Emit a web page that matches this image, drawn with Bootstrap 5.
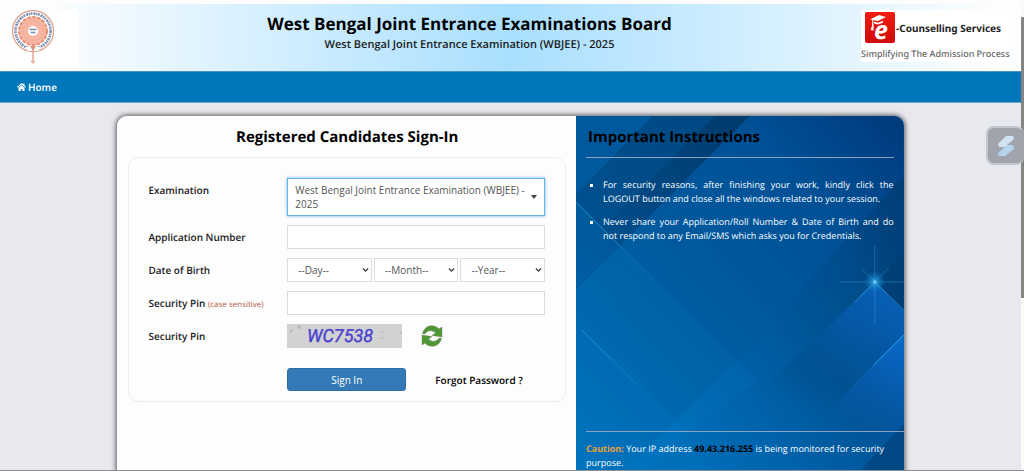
<!DOCTYPE html>
<html lang="en">
<head>
<meta charset="utf-8">
<meta name="viewport" content="width=device-width, initial-scale=1">
<title>WBJEE - Registered Candidates Sign-In</title>
<link href="https://cdn.jsdelivr.net/npm/bootstrap@5.3.0/dist/css/bootstrap.min.css" rel="stylesheet">
<style>
  body { font-family: "Open Sans", sans-serif; font-size: 10px; line-height: 14px; color: #1c1c1c; background: #e7e9ef; text-rendering: geometricPrecision; }
  .viewport { border-bottom: 1px solid #8b8d90; }
  .site-head { border-top: 4px solid #fdfdfd; height: 71px; padding: 6px 11px 0; background: linear-gradient(90deg, #fdfeff 4%, #a9dfff 50%, #fdfeff 98%); }
  .seal { width: 67px; height: 56px; background: #fff; }
  .board-name { font-size: 17px; line-height: 24px; font-weight: 700; color: #000; margin: 2px 0 0; }
  .exam-name { font-size: 11px; line-height: 18px; font-weight: 600; }
  .brand-box { background: #fff; height: 52px; width: 149px; font-family: "Noto Sans", sans-serif; }
  .brand-title { font-size: 10px; font-weight: 700; color: #222; }
  .brand-tag { font-size: 9px; line-height: 16px; font-weight: 500; color: #666; }
  .main-nav { background: #0077bb; border-top: 1px solid #4b93bd; border-bottom: 1px solid #6fa9cb; height: 32px; padding: 0 17px; }
  .main-nav a { font-weight: 600; color: #fff; gap: 2px; }
  .login-box { width: 77%; margin-top: 13px; border-radius: 10px 10px 0 0; box-shadow: 0 0 5px 1px #555; overflow: hidden; }
  .form-side { background: #fdfdfe; padding: 0 10px 0 11px; }
  .side-title { font-size: 15px; line-height: 22px; font-weight: 700; color: #000; margin: 10px 0 9px; }
  .form-frame { border: 1px solid #e9efee; border-radius: 10px; padding: 20px 20px 10px 19px; }
  .form-grid { display: grid; grid-template-columns: 35% 1fr; row-gap: 9px; }
  .form-grid label, .field-name { font-weight: 600; line-height: 24px; }
  .form-grid .hint { font-size: 8px; line-height: 10px; font-weight: 400; color: #b0563d; }
  .field { height: 24px; width: 100%; min-width: 0; padding: 0 8px; border: 1px solid #dcdcdc; border-radius: 0; font-size: 10px; line-height: 14px; color: #555; background-color: #fff; }
  select.field { padding: 0 10px; appearance: none; background-repeat: no-repeat; background-image: url("data:image/svg+xml,%3Csvg xmlns='http://www.w3.org/2000/svg' viewBox='0 0 8 6'%3E%3Cpath d='M1 1.2 4 4.2 7 1.2' fill='none' stroke='%23444' stroke-width='1.5'/%3E%3C/svg%3E"); background-size: 7px 6px; background-position: right 2px center; }
  select.exam-pick { height: 38px; padding: 4px 16px 4px 7px; white-space: normal; border-color: #66b5e4; box-shadow: 0 0 3px #66afe9; background-image: url("data:image/svg+xml,%3Csvg xmlns='http://www.w3.org/2000/svg' viewBox='0 0 8 4'%3E%3Cpath d='M1 0h6L4 4z' fill='%23444'/%3E%3C/svg%3E"); background-size: 8px 4px; background-position: right 6px center; }
  .date-row { gap: 2px; }
  .captcha { width: 115px; height: 24px; background: #d2d2d2; }
  .refresh { margin-left: 17px; line-height: 0; }
  .action-row { padding: 11px 0 0; }
  .sign-in { width: 119px; height: 23px; font-size: 10px; line-height: 14px; background: #337ab7; border: 1px solid #2e6da4; border-radius: 3px; color: #fff; padding: 0; }
  .forgot { font-weight: 600; color: #000; margin-left: 29px; }
  .info-side { background: #005a9e; color: #fff; padding: 0 0 0 10px; min-height: 356px; font-size: 9px; }
  .info-art { position: absolute; inset: 0; width: 100%; height: 100%; }
  .info-side .side-title { margin-left: 2px; }
  .rule { border-top: 1px solid #8aa3c4; }
  .notes { list-style: square; padding-left: 17px; margin: 20px 10px 0 0; text-align: justify; }
  .notes li { margin-bottom: 9px; }
  .info-rule { margin-right: 10px; }
  .caution-box { padding-left: 10px; }
  .caution { padding: 10px 4px 2px 0; }
  .caution b { color: #e6a23c; }
  .caution .ip { font-weight: 700; color: #000; }
  .scroll-strip { width: 3px; background: #fafafa; padding-top: 17px; }
  .scroll-thumb { height: 62%; background: #858585; }
  .helper { position: fixed; right: 0; top: 126px; width: 38px; height: 39px; padding: 0; border: 2px solid #c3c6cd; border-right: 0; border-radius: 8px; background: #a1a4ac; }
</style>
</head>
<body>
<div class="viewport d-flex vh-100 overflow-hidden">
  <div class="flex-grow-1">
    <header class="site-head d-flex justify-content-between">
      <svg class="seal" viewBox="0 0 67 56" role="img" aria-label="Board seal">
        <circle cx="22" cy="21" r="20.5" fill="#fff" stroke="#dda58f" stroke-width="1.3"/>
        <circle cx="22" cy="21" r="17.5" fill="none" stroke="#7d8daf" stroke-width="2.6" stroke-dasharray="2 .7 1.4 .6 1.7 1" pathLength="108"/>
        <path d="M14 37h16l-3 4H17z" fill="#fff"/>
        <circle cx="22" cy="21" r="14.5" fill="#f6b6a2"/>
        <circle cx="22" cy="21" r="14" fill="none" stroke="#e58e73" stroke-width="2" stroke-dasharray="3 2"/>
        <circle cx="22" cy="21" r="10" fill="none" stroke="#ee9f87" stroke-dasharray="1 2"/>
        <circle cx="22" cy="21" r="5" fill="#fff"/>
        <path d="M18.5 19.500h7M19.500 22.500h5" stroke="#7d8daf" stroke-width="1.500"/>
        <path d="M19 36h6l-2.400 4v10h-1.200V40z" fill="#df9277"/>
        <path d="m22 49 2.500 2.500L22 54l-2.500-2.500z" fill="#f0b9a6"/>
      </svg>
      <div class="text-center text-nowrap">
        <h1 class="board-name">West Bengal Joint Entrance Examinations Board</h1>
        <div class="exam-name">West Bengal Joint Entrance Examination (WBJEE) - 2025</div>
      </div>
      <div class="brand-box text-nowrap">
        <div class="d-flex align-items-center">
          <svg class="ms-1" width="31" height="36" viewBox="0 0 31 36" aria-hidden="true">
            <defs><linearGradient id="red" x2="0" y2="1"><stop stop-color="#f21c10"/><stop offset="1" stop-color="#cf0b0b"/></linearGradient></defs>
            <rect x="0" y="2" width="30" height="31" rx="2" fill="url(#red)"/>
            <path d="m5 9.500 9-4.500 7 2-8 4z" fill="#fff"/>
            <path d="m9 11.500 4 1.200 5-2v2l-5 1.800-4-1z" fill="#fff"/>
            <path d="M7 10c.5 4 0 7-1.500 10l3 .5C9 17 8.500 14 8 10z" fill="#fff"/>
            <text x="9" y="29" font-family="Open Sans, sans-serif" font-weight="700" font-style="italic" font-size="25" fill="#fff">e</text>
          </svg>
          <span class="brand-title">-Counselling Services</span>
        </div>
        <div class="brand-tag">Simplifying The Admission Process</div>
      </div>
    </header>

    <nav class="main-nav d-flex align-items-center">
      <a href="#" class="text-decoration-none d-flex align-items-center">
        <svg width="9" height="8" viewBox="0 0 18 16" fill="#fff" aria-hidden="true"><path d="M9 0 0 8l1.500 1.500L9 3l7.500 6.500L18 8l-3-2.700V1h-2.500v2z"/><path d="M9 4.500 3 10v6h4.500v-4h3v4H15v-6z"/></svg>
        <span>Home</span>
      </a>
    </nav>

    <main class="login-box mx-auto">
      <div class="row g-0">
        <section class="col-7 form-side">
          <h2 class="side-title text-center">Registered Candidates Sign-In</h2>
          <form class="form-frame" onsubmit="return false">
            <div class="form-grid">
              <label for="exam">Examination</label>
              <select id="exam" class="field exam-pick"><option>West Bengal Joint Entrance Examination (WBJEE) - 2025</option></select>

              <label for="appno">Application Number</label>
              <input id="appno" type="text" class="field">

              <label for="day">Date of Birth</label>
              <div class="d-flex date-row">
                <select id="day" class="field"><option>--Day--</option></select>
                <select class="field" aria-label="Month"><option>--Month--</option></select>
                <select class="field" aria-label="Year"><option>--Year--</option></select>
              </div>

              <label for="pin">Security Pin <span class="hint">(case sensitive)</span></label>
              <input id="pin" type="text" class="field">

              <span class="field-name">Security Pin</span>
              <div class="d-flex align-items-center">
                <svg class="captcha" viewBox="0 0 115 24" role="img" aria-label="Captcha">
                  <g fill="#b9b9b9"><circle cx="4" cy="7" r="1.500"/><circle cx="12" cy="3" r="2"/><circle cx="95" cy="8" r="1"/><circle cx="95" cy="14" r="1"/><circle cx="114" cy="9" r="1"/></g>
                  <text x="20" y="18" font-family="Roboto, sans-serif" font-style="italic" font-size="18" fill="#4a42cf" stroke="#4a42cf" stroke-width=".4">WC7538</text>
                </svg>
                <button type="button" class="refresh btn p-0 border-0" aria-label="New captcha">
                  <svg width="26" height="22" viewBox="0 0 26 22">
                    <g fill="#4f9636" stroke="#75886a" stroke-width=".5">
                      <path id="arc" d="M3.500 8.500C6-1 16-1 20 4l3-2v10L13 10.500 16.500 8C14 5 8.500 4.500 6 9z"/>
                      <use href="#arc" transform="rotate(180 13 11)"/>
                    </g>
                  </svg>
                </button>
              </div>

              <span></span>
              <div class="action-row d-flex align-items-center">
                <button type="submit" class="btn sign-in">Sign In</button>
                <a href="#" class="forgot text-decoration-none">Forgot Password ?</a>
              </div>
            </div>
          </form>
        </section>

        <aside class="col-5 info-side position-relative">
          <svg class="info-art" viewBox="0 0 328 356" preserveAspectRatio="xMidYMin slice" aria-hidden="true">
            <defs>
              <linearGradient id="base" x1="0" y1="1" x2="1" y2="0"><stop stop-color="#0071ba"/><stop offset=".45" stop-color="#005a9e"/><stop offset=".75" stop-color="#005096"/><stop offset="1" stop-color="#00397a"/></linearGradient>
              <linearGradient id="band" x1="0" y1="1" x2="1" y2="0"><stop stop-color="#00569a"/><stop offset=".5" stop-color="#004680"/><stop offset="1" stop-color="#003a6c"/></linearGradient>
              <linearGradient id="ray" gradientUnits="userSpaceOnUse" x1="90" y1="330" x2="300" y2="180"><stop stop-color="#0070ba"/><stop offset=".35" stop-color="#0063ac"/><stop offset=".65" stop-color="#00579a"/><stop offset="1" stop-color="#004c88"/></linearGradient>
              <linearGradient id="peak" gradientUnits="userSpaceOnUse" x1="310" y1="166" x2="230" y2="300"><stop stop-color="#0860b8"/><stop offset=".35" stop-color="#0658a6"/><stop offset=".7" stop-color="#02508f" stop-opacity=".7"/><stop offset="1" stop-color="#02508f" stop-opacity="0"/></linearGradient>
              <linearGradient id="corner" gradientUnits="userSpaceOnUse" x1="328" y1="225" x2="270" y2="330"><stop stop-color="#0868c8"/><stop offset=".4" stop-color="#075bac"/><stop offset="1" stop-color="#04559d" stop-opacity=".1"/></linearGradient>
              <linearGradient id="shade" x1="0" y1="0" x2="1" y2="0"><stop stop-color="#00477f" stop-opacity="0"/><stop offset="1" stop-color="#003c70"/></linearGradient>
              <radialGradient id="glow"><stop stop-color="#bff4ff"/><stop offset=".2" stop-color="#35a8e8" stop-opacity=".7"/><stop offset="1" stop-color="#0877c9" stop-opacity="0"/></radialGradient>
            </defs>
            <path d="M0 0h328v356H0z" fill="url(#base)"/>
            <path d="M0 0h174L0 174z" fill="url(#band)"/>
            <path d="M0 0h77L0 79z" fill="#00599c"/>
            <path d="M77 0h62L0 139V79z" fill="#00528f" opacity=".6"/>
            <path d="M328 60v140L200 200z" fill="url(#shade)" opacity=".7"/>
            <path d="M234 175 299 166 328 195V356H47z" fill="url(#ray)"/>
            <path d="M299 166l29 28v162H225L160 300z" fill="url(#peak)"/>
            <path d="M299 166 328 137v58z" fill="#003c70" opacity=".5"/>
            <path d="M328 218v138h-60l-60-15z" fill="url(#corner)"/>
            <path d="M328 308v48h-45z" fill="#004078" opacity=".6"/>
            <path d="M0 86 44 130 0 172zM0 205l110 110-40 41H0z" fill="#0080d0" opacity=".2"/>
            <path d="M0 172 44 130 77 162 180 265 110 320 0 205z" fill="#0080d0" opacity=".12"/>
            <g fill="none" stroke="#25a8e8" stroke-width="1"><path d="m0 86 44 44" opacity=".7"/><path d="m44 130 33 32" opacity=".3"/><path d="m6 214 30 30" opacity=".6"/><path d="m36 244 24 24" opacity=".3"/><path d="m328 219-30 30"/><path d="m298 249-20 20" opacity=".2"/><path d="m299 166 29 28M299 166l-20 20" opacity=".6"/></g>
            <g stroke="#43b5ec" stroke-width=".7" opacity=".5"><path d="M299 130v78M265 166h63M286 153l26 26M313 152l-28 28"/></g>
            <circle cx="299" cy="166" r="11" fill="url(#glow)"/>
          </svg>
          <div class="position-relative">
            <h2 class="side-title">Important Instructions</h2>
            <div class="rule info-rule"></div>
            <ul class="notes">
              <li>For security reasons, after finishing your work, kindly click the LOGOUT button and close all the windows related to your session.</li>
              <li>Never share your Application/Roll Number &amp; Date of Birth and do not&nbsp;respond to any Email/SMS which asks you for Credentials.</li>
            </ul>
          </div>
          <div class="position-absolute start-0 end-0 bottom-0 caution-box">
            <div class="rule"></div>
            <p class="caution mb-0"><b>Caution:</b> Your IP address <span class="ip">49.43.216.255</span> is being monitored for security <span>purpose.</span></p>
          </div>
        </aside>
      </div>
    </main>
  </div>
  <div class="scroll-strip" aria-hidden="true"><div class="scroll-thumb"></div></div>
</div>
<button type="button" class="helper" aria-label="Assistant">
  <svg width="20" height="24" viewBox="0 0 20 24" aria-hidden="true"><path d="M10 2h7l1 3-9 8H3l-1-3z" fill="#cfe3f3"/><path d="M11 11h6l1 4-9 7H3l-1-3z" fill="#b5d5ee"/></svg>
</button>
<script src="https://cdn.jsdelivr.net/npm/bootstrap@5.3.0/dist/js/bootstrap.bundle.min.js"></script>
</body>
</html>
